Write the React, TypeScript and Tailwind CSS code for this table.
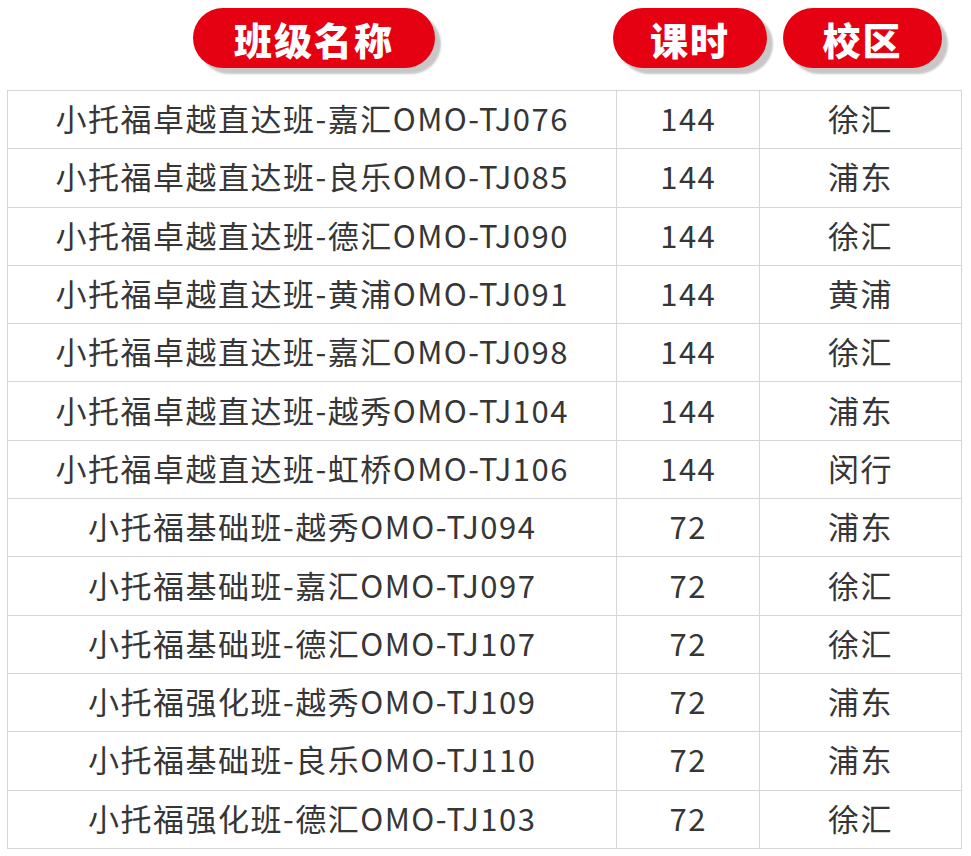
const ROWS: [string, string, string][] = [
  ['小托福卓越直达班-嘉汇OMO-TJ076', '144', '徐汇'],
  ['小托福卓越直达班-良乐OMO-TJ085', '144', '浦东'],
  ['小托福卓越直达班-德汇OMO-TJ090', '144', '徐汇'],
  ['小托福卓越直达班-黄浦OMO-TJ091', '144', '黄浦'],
  ['小托福卓越直达班-嘉汇OMO-TJ098', '144', '徐汇'],
  ['小托福卓越直达班-越秀OMO-TJ104', '144', '浦东'],
  ['小托福卓越直达班-虹桥OMO-TJ106', '144', '闵行'],
  ['小托福基础班-越秀OMO-TJ094', '72', '浦东'],
  ['小托福基础班-嘉汇OMO-TJ097', '72', '徐汇'],
  ['小托福基础班-德汇OMO-TJ107', '72', '徐汇'],
  ['小托福强化班-越秀OMO-TJ109', '72', '浦东'],
  ['小托福基础班-良乐OMO-TJ110', '72', '浦东'],
  ['小托福强化班-德汇OMO-TJ103', '72', '徐汇'],
]

function Pill({ label, w }: { label: string; w: string }) {
  return (
    <div
      className={
        'flex h-[60px] items-center justify-center rounded-full bg-[#e50012] text-[38px] font-black tracking-[2px] text-white ' +
        'shadow-[6px_6px_2px_rgba(0,0,0,0.22)] ' + w
      }
    >
      {label}
    </div>
  )
}

export default function App() {
  return (
    <div className="h-[856px] w-[971px] bg-white pt-2 font-['Noto_Sans_CJK_SC','Noto_Sans',sans-serif] text-[#363636]">
      <div className="flex pl-[193px]">
        <Pill label="班级名称" w="w-[242px]" />
        <div className="ml-[178px]">
          <Pill label="课时" w="w-[154px]" />
        </div>
        <div className="ml-4">
          <Pill label="校区" w="w-[159px]" />
        </div>
      </div>

      <table className="ml-[7px] mt-[22px] w-[955px] border-collapse border border-[#d6d6d6] text-[31px] tracking-[1.5px]">
        <colgroup>
          <col className="w-[610px]" />
          <col className="w-[143px]" />
          <col className="w-[202px]" />
        </colgroup>
        <tbody>
          {ROWS.map(([name, hours, campus], i) => (
            <tr key={i} className="h-[58.3px]">
              <td className="border border-[#d6d6d6] p-0 pb-[4px] text-center leading-none">{name}</td>
              <td className="border border-[#d6d6d6] p-0 pb-[4px] text-center leading-none">{hours}</td>
              <td className="border border-[#d6d6d6] p-0 pb-[4px] text-center leading-none">{campus}</td>
            </tr>
          ))}
        </tbody>
      </table>
    </div>
  )
}
